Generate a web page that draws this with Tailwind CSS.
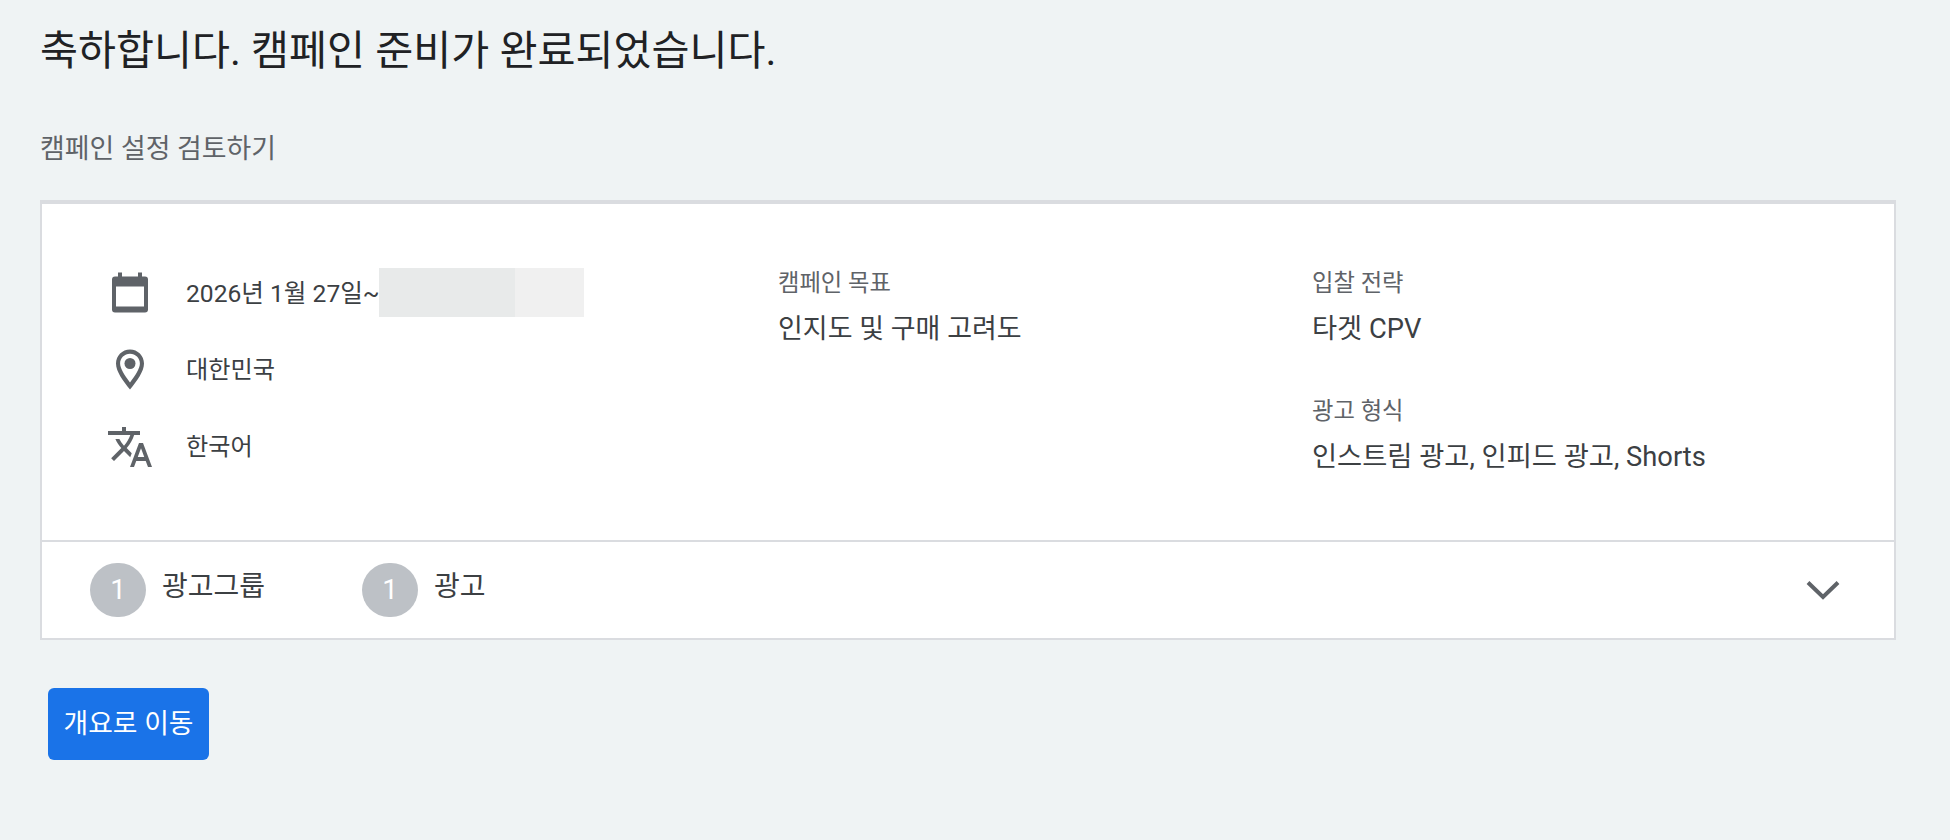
<!doctype html>
<html lang="ko">
<head>
  <meta charset="UTF-8">
  <title>캠페인 준비 완료</title>
  <script src="https://cdn.jsdelivr.net/npm/@tailwindcss/browser@4"></script>
</head>
<body class="bg-[#eff3f4] h-[840px] overflow-hidden font-['Roboto','Noto_Sans_CJK_KR',sans-serif] text-[#3c4043]">

<div class="pl-[40px] pr-[54px]">
  <h1 class="pt-[23px] h-[80px] text-[41.3px] leading-[56px] font-normal text-[#202124]">축하합니다. 캠페인 준비가 완료되었습니다.</h1>
  <h2 class="mt-[48px] h-[40px] pt-[1px] text-[26.9px] leading-[40px] font-normal text-[#5f6368]">캠페인 설정 검토하기</h2>

  <!-- 요약 카드 -->
  <div class="mt-[32px] h-[440px] bg-white border-2 border-t-4 border-[#dadce0] flex flex-col">
    <div class="h-[338px] flex border-b-2 border-[#dadce0]">
      <div class="w-[736px] pl-[68px] pt-[50px] flex flex-col">
        <div class="h-[77px] flex items-center gap-[36px] text-[24px]">
          <svg class="w-[40px] h-[48px] shrink-0" viewBox="0 0 40 48" fill="#5f6368"><path fill-rule="evenodd" d="M8 3.500h4v4h16v-4h4v4h3a3 3 0 0 1 3 3v30a3 3 0 0 1-3 3H5a3 3 0 0 1-3-3v-30a3 3 0 0 1 3-3h3zM6 17.500v20h28v-20z"/></svg>
          <div class="flex items-center h-[49px]">
            <span class="w-[193px] pt-[3px] whitespace-nowrap text-[24.6px]">2026년 1월 27일~</span>
            <span class="w-[136px] h-[49px] bg-[#e8eaea]"></span><span class="w-[69px] h-[49px] bg-[#f0f0f0]"></span>
          </div>
        </div>
        <div class="h-[77px] flex items-center gap-[36px] text-[24.2px]">
          <svg class="w-[40px] h-[48px] shrink-0" viewBox="0 0 40 48" fill="#5f6368"><path fill-rule="evenodd" d="M20 3.500C12.200 3.500 6 9.800 6 17.500c0 8 6.800 17 14 26 7.200-9 14-18 14-26 0-7.700-6.200-14-14-14zm0 4.200c5.500 0 9.900 4.300 9.900 9.800 0 5-4.600 11.800-9.900 19-5.300-7.200-9.900-14-9.900-19 0-5.500 4.400-9.800 9.900-9.800z"/><circle cx="20" cy="17.500" r="5.500"/></svg>
          <span class="pt-[2px]">대한민국</span>
        </div>
        <div class="h-[77px] flex items-center gap-[36px] text-[24.2px]">
          <svg class="w-[48px] h-[48px] shrink-0 -ml-[4px] -mr-[4px]" viewBox="0 0 24 24" fill="#5f6368"><path d="M12.870 15.070l-2.540-2.510.030-.030c1.740-1.940 2.980-4.170 3.710-6.530H17V4h-7V2H8v2H1v1.990h11.170C11.500 7.920 10.440 9.750 9 11.350 8.070 10.320 7.300 9.190 6.690 8h-2c.73 1.630 1.730 3.170 2.980 4.560l-5.090 5.020L4 19l5-5 3.110 3.110.760-2.040zM18.500 10h-2L12 22h2l1.120-3h4.750L21 22h2l-4.500-12zm-2.620 7l1.620-4.330L19.120 17h-3.240z"/></svg>
          <span class="pt-[2px]">한국어</span>
        </div>
      </div>
      <div class="w-[534px] pt-[63px]">
        <div class="text-[23.3px] leading-[32px] text-[#5f6368]">캠페인 목표</div>
        <div class="mt-[14px] text-[27px] leading-[32px]">인지도 및 구매 고려도</div>
      </div>
      <div class="pt-[63px]">
        <div class="text-[23.3px] leading-[32px] text-[#5f6368]">입찰 전략</div>
        <div class="mt-[14px] text-[27.3px] leading-[32px]">타겟 CPV</div>
        <div class="mt-[50px] text-[23.3px] leading-[32px] text-[#5f6368]">광고 형식</div>
        <div class="mt-[14px] text-[27.3px] leading-[32px]">인스트림 광고, 인피드 광고, Shorts</div>
      </div>
    </div>
    <div class="flex-1 flex items-center pl-[48px] pr-[54px]">
      <div class="flex items-center gap-[16px] w-[272px]">
        <span class="w-[56px] h-[54px] rounded-full bg-[#bdc1c6] text-white text-[28px] flex items-center justify-center">1</span>
        <span class="text-[28px] -mt-[6px]">광고그룹</span>
      </div>
      <div class="flex items-center gap-[16px]">
        <span class="w-[56px] h-[54px] rounded-full bg-[#bdc1c6] text-white text-[28px] flex items-center justify-center">1</span>
        <span class="text-[28px] -mt-[6px]">광고</span>
      </div>
      <svg class="ml-auto w-[34px] h-[21px]" viewBox="0 0 34 21" fill="none" stroke="#5f6368" stroke-width="4"><path d="M2 2.500l15 14.500 15-14.500"/></svg>
    </div>
  </div>

  <button class="mt-[48px] ml-[8px] w-[161px] h-[72px] pt-[1px] rounded-[6px] bg-[#1a73e8] text-white text-[26.8px]">개요로 이동</button>
</div>

</body>
</html>
